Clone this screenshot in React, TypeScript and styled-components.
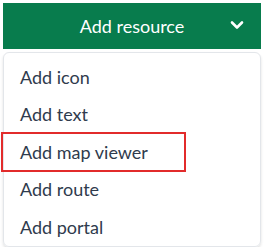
import React from 'react';
import styled, { createGlobalStyle } from 'styled-components';

const GlobalStyle = createGlobalStyle`
  body {
    margin: 0;
    background: #ffffff;
    font-family: Lato, "Open Sans", sans-serif;
  }
`;

const Wrapper = styled.div`
  padding: 3px 3px 0 3px;
  width: 258px;
`;

const Toggle = styled.button`
  width: 100%;
  height: 46px;
  display: flex;
  align-items: center;
  justify-content: center;
  position: relative;
  background-color: #087c4d;
  color: #ffffff;
  border: none;
  font-family: inherit;
  font-size: 18px;
  padding: 0;
  cursor: pointer;
`;

const Chevron = styled.svg`
  position: absolute;
  right: 17px;
  top: 17px;
`;

const Menu = styled.ul`
  list-style: none;
  margin: 3px 0 0 0;
  padding: 5px 0 3px 0;
  border: 1px solid #e3e6ea;
  border-radius: 6px;
  box-shadow: 0 2px 3px rgba(0, 0, 0, 0.12);
  box-sizing: border-box;
  height: 195px;
`;

const Item = styled.li<{ $highlight?: boolean }>`
  height: 37.5px;
  display: flex;
  align-items: center;
  padding-left: 16px;
  font-size: 18px;
  color: #2f3b4d;
  position: relative;
  cursor: pointer;

  ${(p) =>
    p.$highlight &&
    `
    &::after {
      content: '';
      position: absolute;
      left: -3px;
      top: -1px;
      width: 185px;
      height: 40px;
      box-sizing: border-box;
      border: 2.5px solid #e22b2b;
    }
  `}
`;

const items = ['Add icon', 'Add text', 'Add map viewer', 'Add route', 'Add portal'];

const App: React.FC = () => {
  return (
    <>
      <GlobalStyle />
      <Wrapper>
        <Toggle type="button">
          Add resource
          <Chevron width="14" height="10" viewBox="0 0 14 10">
            <path d="M2 2.5 L7 7.5 L12 2.5" fill="none" stroke="#ffffff" strokeWidth="2.6" strokeLinecap="round" strokeLinejoin="round" />
          </Chevron>
        </Toggle>
        <Menu>
          {items.map((label) => (
            <Item key={label} $highlight={label === 'Add map viewer'}>
              {label}
            </Item>
          ))}
        </Menu>
      </Wrapper>
    </>
  );
};

export default App;
